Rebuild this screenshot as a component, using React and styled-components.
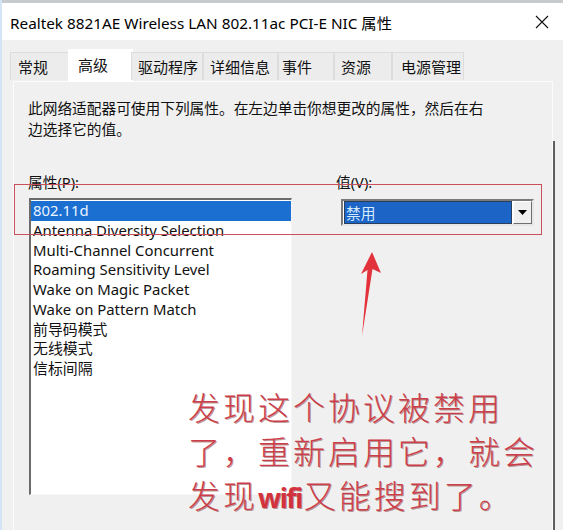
import React from "react";
import styled, { createGlobalStyle } from "styled-components";

const UI = `"Noto Sans", "Noto Sans CJK SC", sans-serif`;
const CJK = `"Noto Sans CJK SC", sans-serif`;

const Global = createGlobalStyle`
  html, body { margin: 0; padding: 0; background: #f0f0f0; overflow: hidden; }
  * { box-sizing: border-box; }
`;

const Window = styled.div`
  position: relative;
  width: 563px;
  height: 530px;
  overflow: hidden;
  background: #f0f0f0;
  border-left: 2px solid #d4e4f4;
  font-family: ${UI};
  color: #000;
`;

const TopStrip = styled.div`
  height: 3px;
  background: #c7cbcf;
`;

const TitleBar = styled.div`
  height: 37px;
  background: #fff;
  display: flex;
  align-items: center;
  justify-content: space-between;
  padding: 0 14px 0 8px;
`;

const Title = styled.div`
  font-size: 15.3px;
`;

const Body = styled.div`
  padding-top: 9px;
`;

const TabRow = styled.div`
  display: flex;
  align-items: flex-start;
  height: 32px;
  padding-left: 8px;
  position: relative;
  z-index: 2;
`;

const Tab = styled.div`
  font-family: ${CJK};
  font-size: 15px;
  width: ${(p) => p.$w}px;
  padding-left: ${(p) => p.$pl}px;
  height: ${(p) => (p.$active ? 33 : 28)}px;
  margin-top: ${(p) => (p.$active ? 0 : 3)}px;
  line-height: ${(p) => (p.$active ? 30 : 28)}px;
  background: ${(p) => (p.$active ? "#ffffff" : "#ececec")};
  border: 1px solid ${(p) => (p.$active ? "#ffffff" : "#dcdcdc")};
  border-bottom: none;
  margin-left: ${(p) => (p.$active ? -2 : 0)}px;
  margin-right: ${(p) => (p.$active ? -2 : 0)}px;
  color: #111;
`;

const Stage = styled.div`
  display: flex;
  align-items: flex-start;
`;

const Panel = styled.div`
  margin-left: 11px;
  width: 540px;
  height: 460px;
  background: #f0f0f0;
  border: 1px solid #fbfbfb;
  padding: 15px 0 0 14px;
`;

const RightEdge = styled.div`
  width: 2px;
  height: 400px;
  margin-top: 60px;
  background: #5e5e5e;
`;

const Desc = styled.p`
  margin: 0;
  width: 462px;
  font-family: ${CJK};
  font-size: 14.7px;
  line-height: 21px;
  color: #111;
`;

const Fields = styled.div`
  display: grid;
  grid-template-columns: 265px 200px;
  column-gap: 43px;
  margin-top: 33px;
`;

const Column = styled.div`
  display: flex;
  flex-direction: column;
`;

const Label = styled.div`
  font-size: 14.7px;
  line-height: 20px;
  height: 20px;
  margin-bottom: 6px;
  color: #111;
`;

const ListBox = styled.div`
  width: 263px;
  height: 297px;
  margin-left: 1px;
  background: #fff;
  border-style: solid;
  border-width: 2px 1px 1px 2px;
  border-color: #6b6b6b #f6f6f6 #f6f6f6 #6b6b6b;
  padding-top: 1px;
`;

const Item = styled.div`
  height: 19.75px;
  line-height: 19.75px;
  padding-left: 2px;
  font-size: 14.9px;
  white-space: nowrap;
  background: ${(p) => (p.$selected ? "#1b6fd1" : "transparent")};
  color: ${(p) => (p.$selected ? "#eaf4ff" : "#111")};
`;

const Combo = styled.div`
  display: flex;
  width: 193px;
  height: 27px;
  margin-left: 5px;
  margin-top: 1px;
  border-style: solid;
  border-width: 2px;
  border-color: #7a7a7a #e6e6e6 #e6e6e6 #7a7a7a;
  background: #fff;
`;

const ComboValue = styled.div`
  flex: 1;
  margin: 0 1px 0 1px;
  background: #1c64c6;
  border: 1px solid #2a3f5c;
  color: #d4ecff;
  font-family: ${CJK};
  font-size: 14.7px;
  line-height: 21px;
  padding-left: 1px;
`;

const ComboButton = styled.div`
  width: 19px;
  display: flex;
  align-items: center;
  justify-content: center;
  background: #f0f0f0;
  border-style: solid;
  border-width: 1px;
  border-color: #ffffff #6e6e6e #6e6e6e #ffffff;
`;

const RedFrame = styled.div`
  position: absolute;
  left: 12px;
  top: 184px;
  width: 528px;
  height: 51px;
  border: 1px solid #c9505a;
  pointer-events: none;
`;

const ArrowSvg = styled.svg`
  position: absolute;
  left: 350px;
  top: 245px;
`;

const Note = styled.div`
  position: absolute;
  left: 186px;
  top: 384px;
  font-family: ${CJK};
  font-weight: 300;
  font-size: 32px;
  line-height: 44px;
  letter-spacing: 3px;
  color: #cc3f4a;
  text-shadow: 1px 1px 0 rgba(110, 30, 35, 0.45);
  white-space: nowrap;
`;

const Wifi = styled.span`
  font-family: "Noto Sans", sans-serif;
  font-weight: 700;
  font-size: 27px;
  letter-spacing: -1.5px;
  margin-right: 2px;
  color: #d2323d;
`;

const tabs = [
  { t: "常规", w: 60, pl: 7 },
  { t: "高级", w: 65, pl: 9, active: true },
  { t: "驱动程序", w: 72, pl: 6 },
  { t: "详细信息", w: 75, pl: 6 },
  { t: "事件", w: 56, pl: 3 },
  { t: "资源", w: 58, pl: 6 },
  { t: "电源管理", w: 72, pl: 8 },
];

const items = [
  "802.11d",
  "Antenna Diversity Selection",
  "Multi-Channel Concurrent",
  "Roaming Sensitivity Level",
  "Wake on Magic Packet",
  "Wake on Pattern Match",
  "前导码模式",
  "无线模式",
  "信标间隔",
];

export default function App() {
  return (
    <>
      <Global />
      <Window>
        <TopStrip />
        <TitleBar>
          <Title>Realtek 8821AE Wireless LAN 802.11ac PCI-E NIC 属性</Title>
          <svg width="14" height="14" viewBox="0 0 14 14">
            <path d="M1 1 L13 13 M13 1 L1 13" stroke="#111" strokeWidth="1.1" />
          </svg>
        </TitleBar>
        <Body>
          <TabRow>
            {tabs.map((x) => (
              <Tab key={x.t} $w={x.w} $pl={x.pl} $active={x.active}>
                {x.t}
              </Tab>
            ))}
          </TabRow>
          <Stage>
            <Panel>
              <Desc>
                此网络适配器可使用下列属性。在左边单击你想更改的属性，然后在右边选择它的值。
              </Desc>
              <Fields>
                <Column>
                  <Label>属性(P):</Label>
                  <ListBox>
                    {items.map((it, i) => (
                      <Item key={it} $selected={i === 0}>
                        {it}
                      </Item>
                    ))}
                  </ListBox>
                </Column>
                <Column>
                  <Label>值(V):</Label>
                  <Combo>
                    <ComboValue>禁用</ComboValue>
                    <ComboButton>
                      <svg width="9" height="5" viewBox="0 0 9 5">
                        <path d="M0 0 L9 0 L4.5 5 Z" fill="#000" />
                      </svg>
                    </ComboButton>
                  </Combo>
                </Column>
              </Fields>
            </Panel>
            <RightEdge />
          </Stage>
        </Body>
        <RedFrame />
        <ArrowSvg width="40" height="100" viewBox="350 245 40 100">
          <polygon
            points="370,252 379,273 370.5,269 360,336 365.5,270 359,274"
            fill="#e2333c"
          />
        </ArrowSvg>
        <Note>
          发现这个协议被禁用
          <br />
          了，重新启用它，就会
          <br />
          发现<Wifi>wifi</Wifi>又能搜到了。
        </Note>
      </Window>
    </>
  );
}
